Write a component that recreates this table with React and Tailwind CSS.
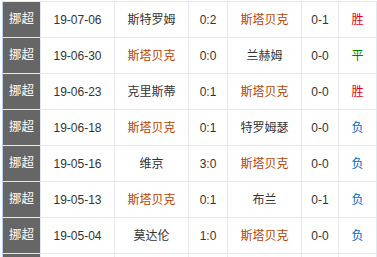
import React from "react";

const rows = [
  ["19-07-06", "斯特罗姆", false, "0:2", "斯塔贝克", true, "0-1", "胜"],
  ["19-06-30", "斯塔贝克", true, "0:0", "兰赫姆", false, "0-0", "平"],
  ["19-06-23", "克里斯蒂", false, "0:1", "斯塔贝克", true, "0-0", "胜"],
  ["19-06-18", "斯塔贝克", true, "0:1", "特罗姆瑟", false, "0-0", "负"],
  ["19-05-16", "维京", false, "3:0", "斯塔贝克", true, "0-0", "负"],
  ["19-05-13", "斯塔贝克", true, "0:1", "布兰", false, "0-1", "负"],
  ["19-05-04", "莫达伦", false, "1:0", "斯塔贝克", true, "0-0", "负"],
];

const resColor = { 胜: "text-[#e60012]", 平: "text-[#008000]", 负: "text-[#0066cc]" };

function Row({ r, label }) {
  return (
    <div className="flex h-[36px] border-b border-[#e3e8f0]">
      <div className="flex w-[38px] shrink-0 items-center justify-center border-r border-[#e3e8f0] bg-[#666666] text-[12.5px] text-white">
        {label}
      </div>
      <div className="flex w-[74px] shrink-0 items-center justify-center border-r border-[#e3e8f0] text-[#333]">
        {r[0]}
      </div>
      <div
        className={
          "flex w-[74px] shrink-0 items-center justify-center border-r border-[#e3e8f0] " +
          (r[2] ? "text-[#b54300]" : "text-[#333]")
        }
      >
        {r[1]}
      </div>
      <div className="flex w-[39px] shrink-0 items-center justify-center border-r border-[#e3e8f0] text-[#333]">
        {r[3]}
      </div>
      <div
        className={
          "flex w-[74px] shrink-0 items-center justify-center border-r border-[#e3e8f0] " +
          (r[5] ? "text-[#b54300]" : "text-[#333]")
        }
      >
        {r[4]}
      </div>
      <div className="flex w-[37px] shrink-0 items-center justify-center border-r border-[#e3e8f0] text-[#333]">
        {r[6]}
      </div>
      <div
        className={
          "flex w-[38px] shrink-0 items-center justify-center border-r border-[#e3e8f0] " +
          (resColor[r[7]] || "")
        }
      >
        {r[7]}
      </div>
    </div>
  );
}

export default function App() {
  return (
    <div
      className="h-[257px] w-[377px] overflow-hidden bg-white text-[12px]"
      style={{ fontFamily: '"Liberation Sans", "Noto Sans CJK SC", sans-serif' }}
    >
      <div className="ml-[2px] mt-px border-l border-t border-l-[#b9d2ec] border-t-[#e3e8f0]">
        {rows.map((r, i) => (
          <Row key={i} r={r} label="挪超" />
        ))}
        <Row r={["", "", false, "", "", false, "", ""]} label="" />
      </div>
    </div>
  );
}
